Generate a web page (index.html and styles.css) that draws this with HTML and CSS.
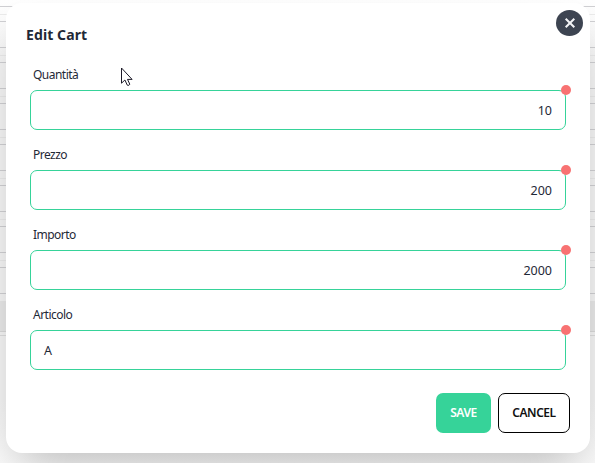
FILE: index.html
```html
<!DOCTYPE html>
<html lang="it">
<head>
<meta charset="utf-8">
<title>Edit Cart</title>
<link rel="stylesheet" href="styles.css">
</head>
<body>
<div class="backdrop"><div class="rows"></div><div class="footer-row"></div></div>
<main class="modal">
  <button class="close" aria-label="Close"><svg width="12" height="12" viewBox="0 0 12 12"><path d="M1.7 1.7l8.6 8.6M10.3 1.7l-8.6 8.6" fill="none" stroke="#f3f4f6" stroke-width="2"/></svg></button>
  <h1 class="title">Edit Cart</h1>
  <form class="form">
    <label class="field"><span class="label">Quantità</span><span class="control num">10<i class="dot"></i></span></label>
    <label class="field"><span class="label">Prezzo</span><span class="control num">200<i class="dot"></i></span></label>
    <label class="field"><span class="label">Importo</span><span class="control num">2000<i class="dot"></i></span></label>
    <label class="field"><span class="label">Articolo</span><span class="control">A<i class="dot"></i></span></label>
  </form>
  <div class="actions">
    <button class="btn save">SAVE</button>
    <button class="btn cancel">CANCEL</button>
  </div>
</main>
<svg class="cursor" width="13" height="20" viewBox="0 0 13 20"><path d="M1.5 1v15.2l3.4-3.2 2.4 5.2q1.8.8 2.5-1l-2.3-4.8h4.6z" fill="#fff" stroke="#1c1a28" stroke-width="1"/></svg>
</body>
</html>
```
FILE: styles.css
```css
* { box-sizing: border-box; }
body {
  margin: 0;
  width: 595px;
  height: 463px;
  overflow: hidden;
  position: relative;
  background: #fff;
  color: #1f2937;
  font-family: "Noto Sans", "Open Sans", sans-serif;
}
.backdrop {
  position: absolute;
  inset: 0;
  padding-top: 6px;
  background: linear-gradient(to bottom, #fff 0, #f6f6f6 60px, #f6f6f6 400px, #fcfcfc 463px);
}
.rows {
  height: 295px;
  background: repeating-linear-gradient(to bottom,
    #d0d0d3 0 1px, transparent 1px 8px,
    #ebebeb 8px 9px, transparent 9px 15px,
    #d0d0d3 15px 16px, transparent 16px 41px);
}
.footer-row {
  height: 35px;
  background: linear-gradient(to bottom, #e9e9e9 0 30px, #dadada 30px 31px, transparent 31px 34px, #dedede 34px 35px);
}
.modal {
  position: relative;
  width: 584px;
  height: 450px;
  margin: 3px 0 0 6px;
  padding: 21px 20px 20px;
  border-radius: 16px;
  background: #fff;
  box-shadow: 0 25px 50px -12px rgba(0, 0, 0, .25);
}
.close {
  position: absolute;
  top: 7px;
  right: 7px;
  width: 27px;
  height: 26px;
  padding: 0;
  border: 0;
  border-radius: 50%;
  background: #3d4451;
  display: flex;
  align-items: center;
  justify-content: center;
}
.title {
  margin: 0;
  height: 22px;
  font-size: 14px;
  line-height: 22px;
  font-weight: 700;
  letter-spacing: .1px;
}
.form {
  margin-top: 17px;
  padding: 0 4px;
}
.field {
  display: block;
  height: 80px;
}
.label {
  display: block;
  height: 27px;
  padding-left: 3px;
  font-size: 12px;
  line-height: 24px;
  letter-spacing: -.52px;
}
.control {
  position: relative;
  display: flex;
  align-items: center;
  height: 40px;
  padding: 0 13px;
  border: 1px solid #36d399;
  border-radius: 7px;
  font-size: 12.5px;
}
.num { justify-content: flex-end; }
.dot {
  position: absolute;
  top: -6px;
  right: -6px;
  width: 10px;
  height: 10px;
  border-radius: 50%;
  background: #f87272;
}
.actions {
  display: flex;
  justify-content: flex-end;
  gap: 7px;
  margin-top: 10px;
}
.btn {
  height: 40px;
  padding: 0 0 2px;
  border-radius: 7px;
  font: 600 12px "Noto Sans", sans-serif;
  letter-spacing: -.45px;
}
.save {
  width: 55px;
  border: 0;
  background: #36d399;
  color: #fff;
}
.cancel {
  width: 72px;
  border: 1px solid #000;
  background: #fff;
  color: #111;
}
.cursor {
  position: absolute;
  left: 120px;
  top: 67px;
}
```
